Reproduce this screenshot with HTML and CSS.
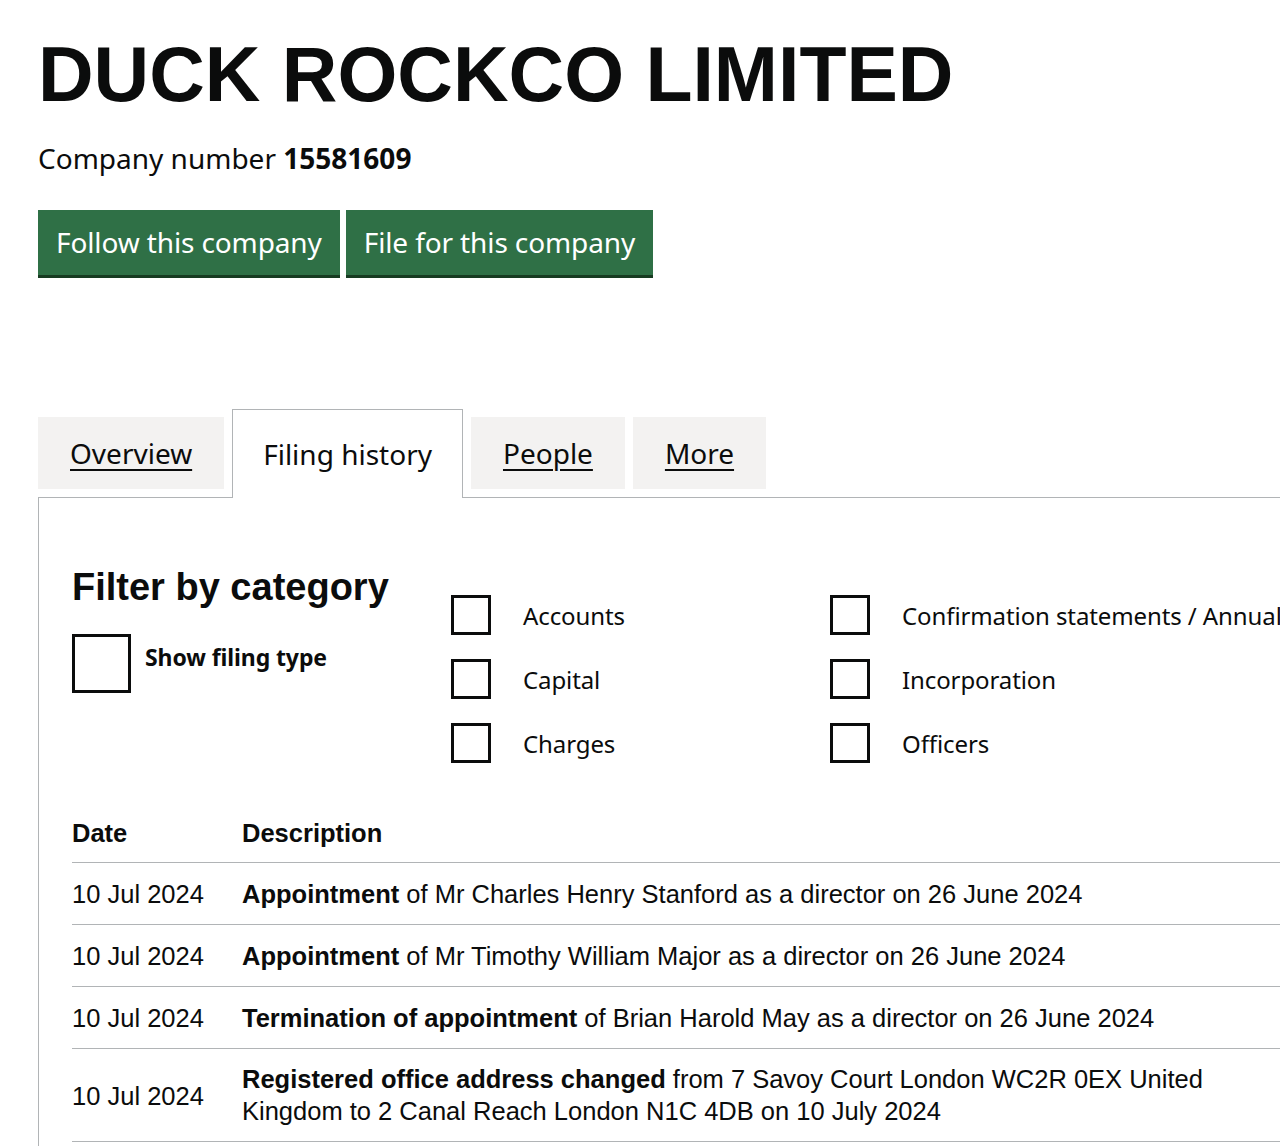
FILE: index.html
```html
<!DOCTYPE html>
<html lang="en">

<head>
  <meta charset="UTF-8" />
  <meta name="viewport" content="width=device-width, initial-scale=1" />
  <title>DUCK ROCKCO LIMITED filing history</title>
  <link rel="stylesheet" href="styles.css">
</head>

<body>
  <div class="page">
    <h1 class="company-name">DUCK ROCKCO LIMITED</h1>
    <p class="company-number">Company number <strong>15581609</strong></p>

    <div class="actions">
      <a class="button" href="#">Follow this company</a>
      <a class="button" href="#">File for this company</a>
    </div>

    <ul class="tabs">
      <li class="tab"><a href="#">Overview</a></li>
      <li class="tab tab-active"><span>Filing history</span></li>
      <li class="tab"><a href="#">People</a></li>
      <li class="tab"><a href="#">More</a></li>
    </ul>

    <div class="panel">
      <form class="filters">
        <div class="filter-main">
          <h2>Filter by category</h2>
          <label class="check check-large">
            <input type="checkbox" />
            <span class="box"></span>
            <span class="check-label">Show filing type</span>
          </label>
        </div>

        <div class="filter-list">
          <label class="check"><input type="checkbox" /><span class="box"></span><span class="check-label">Accounts</span></label>
          <label class="check"><input type="checkbox" /><span class="box"></span><span class="check-label">Capital</span></label>
          <label class="check"><input type="checkbox" /><span class="box"></span><span class="check-label">Charges</span></label>
        </div>

        <div class="filter-list">
          <label class="check"><input type="checkbox" /><span class="box"></span><span class="check-label">Confirmation statements / Annual returns</span></label>
          <label class="check"><input type="checkbox" /><span class="box"></span><span class="check-label">Incorporation</span></label>
          <label class="check"><input type="checkbox" /><span class="box"></span><span class="check-label">Officers</span></label>
        </div>
      </form>

      <table class="filings">
        <thead>
          <tr>
            <th class="col-date">Date</th>
            <th>Description</th>
          </tr>
        </thead>
        <tbody>
          <tr>
            <td>10 Jul 2024</td>
            <td><strong>Appointment</strong> of Mr Charles Henry Stanford as a director on 26 June 2024</td>
          </tr>
          <tr>
            <td>10 Jul 2024</td>
            <td><strong>Appointment</strong> of Mr Timothy William Major as a director on 26 June 2024</td>
          </tr>
          <tr>
            <td>10 Jul 2024</td>
            <td><strong>Termination of appointment</strong> of Brian Harold May as a director on 26 June 2024</td>
          </tr>
          <tr>
            <td>10 Jul 2024</td>
            <td><div class="desc"><strong>Registered office address changed</strong> from 7 Savoy Court London WC2R 0EX United Kingdom to 2 Canal Reach London N1C 4DB on 10 July 2024</div></td>
          </tr>
        </tbody>
      </table>
    </div>
  </div>
</body>

</html>
```

FILE: styles.css
```css
body {
  margin: 0;
  background-color: #ffffff;
  color: #0b0c0c;
  font-family: "Noto Sans", Arial, sans-serif;
  overflow: hidden;
}

.page {
  width: 1500px;
  padding: 0 38px;
}

.company-name {
  margin: 34px 0 0;
  font-family: "Liberation Sans", Arial, sans-serif;
  font-size: 77px;
  line-height: 80px;
  font-weight: 700;
}

.company-number {
  margin: 24px 0 0;
  font-size: 28px;
  line-height: 40px;
}

.actions {
  display: flex;
  gap: 6px;
  margin-top: 32px;
}

.button {
  display: block;
  padding: 16px 18px;
  font-size: 28px;
  line-height: 33px;
  letter-spacing: -0.12px;
  color: #ffffff;
  text-decoration: none;
  background-color: #2f7046;
  box-shadow: 0 3px 0 #173b21;
}

/* tabs */

.tabs {
  display: flex;
  align-items: flex-end;
  gap: 8px;
  margin: 134px 0 0;
  padding: 0;
  list-style: none;
}

.tab {
  display: flex;
  align-items: center;
  height: 72px;
  margin-bottom: 8px;
  padding: 0 32px;
  font-size: 28px;
  background-color: #f3f2f1;
}

.tab a {
  color: #0b0c0c;
  text-decoration: underline;
  text-decoration-thickness: 2px;
  text-underline-offset: 5px;
}

.tab-active {
  position: relative;
  z-index: 1;
  height: 88px;
  margin-bottom: -1px;
  padding: 0 30px;
  background-color: #ffffff;
  border: 1px solid #b1b4b6;
  border-bottom: 0;
}

.panel {
  padding: 68px 33px 40px;
  border: 1px solid #b1b4b6;
}

/* filters */

.filters {
  display: grid;
  grid-template-columns: 379px 379px 1fr;
}

.filter-main h2 {
  margin: 0;
  font-family: "Liberation Sans", Arial, sans-serif;
  font-size: 38px;
  line-height: 42px;
  font-weight: 700;
}

.check {
  display: flex;
  align-items: center;
  gap: 32px;
  font-size: 24px;
  letter-spacing: -0.1px;
  cursor: pointer;
}

.check input {
  display: none;
}

.box {
  flex: none;
  width: 40px;
  height: 40px;
  box-sizing: border-box;
  border: 3px solid #0b0c0c;
}

.check-label {
  white-space: nowrap;
}

.check-large {
  align-items: flex-start;
  gap: 14px;
  margin-top: 26px;
}

.check-large .box {
  width: 59px;
  height: 59px;
}

.check-large .check-label {
  margin-top: 7px;
  font-size: 23px;
  font-weight: 700;
}

.filter-list {
  display: flex;
  flex-direction: column;
  gap: 24px;
  margin-top: 29px;
}

/* filing table */

.filings {
  width: 100%;
  margin-top: 41px;
  border-collapse: collapse;
  font-family: "Liberation Sans", Arial, sans-serif;
  font-size: 25.5px;
  line-height: 32px;
  text-align: left;
}

.filings th,
.filings td {
  padding: 14px 20px 14px 0;
  border-bottom: 1px solid #b1b4b6;
  vertical-align: middle;
}

.filings th {
  padding: 13px 20px 13px 0;
  font-weight: 700;
}

.filings td:first-child {
  padding-top: 15px;
}

.col-date {
  width: 150px;
}

.desc {
  max-width: 1000px;
}
```
